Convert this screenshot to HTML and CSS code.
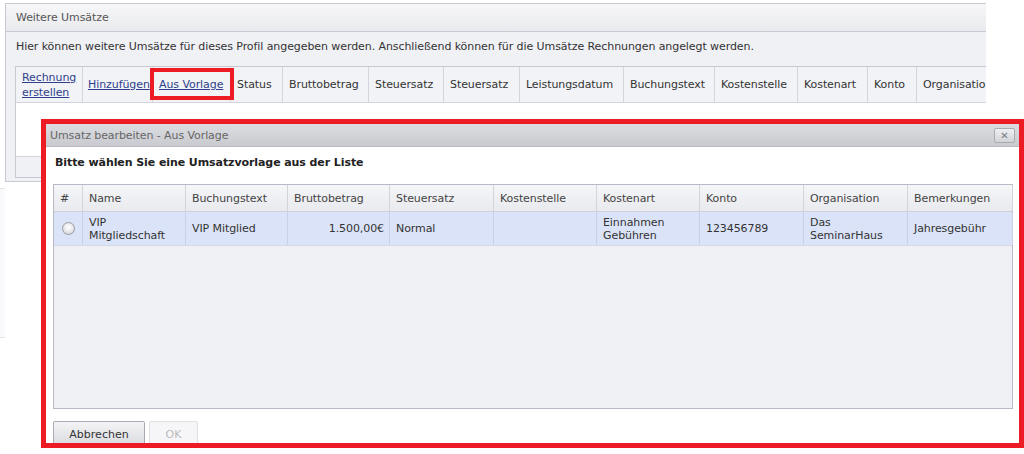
FILE: index.html
```html
<!DOCTYPE html>
<html lang="de">
<head>
<meta charset="utf-8">
<title>Weitere Umsätze</title>
<link rel="stylesheet" href="styles.css">
</head>
<body>
<div class="page">
  <div class="edge-frag"></div>
  <section class="bgwin">
    <div class="bgwin-title">Weitere Umsätze</div>
    <div class="bgwin-body">
      <p class="intro">Hier können weitere Umsätze für dieses Profil angegeben werden. Anschließend können für die Umsätze Rechnungen angelegt werden.</p>
      <div class="bggrid">
        <div class="bghead">
          <div class="bgcell c1"><a href="#">Rechnung erstellen</a></div>
          <div class="bgcell c2"><a href="#">Hinzufügen</a></div>
          <div class="bgcell c3"><a href="#">Aus Vorlage</a></div>
          <div class="bgcell c4">Status</div>
          <div class="bgcell c5">Bruttobetrag</div>
          <div class="bgcell c6">Steuersatz</div>
          <div class="bgcell c7">Steuersatz</div>
          <div class="bgcell c8">Leistungsdatum</div>
          <div class="bgcell c9">Buchungstext</div>
          <div class="bgcell c10">Kostenstelle</div>
          <div class="bgcell c11">Kostenart</div>
          <div class="bgcell c12">Konto</div>
          <div class="bgcell c13">Organisation</div>
        </div>
        <div class="bgbody"></div>
        <div class="bgfoot"></div>
      </div>
    </div>
  </section>

  <div class="mark-vorlage"></div>

  <section class="dialog">
    <div class="dlg-title">
      <span>Umsatz bearbeiten - Aus Vorlage</span>
      <span class="dlg-close">&#x2715;</span>
    </div>
    <div class="dlg-body">
      <p class="dlg-lead">Bitte wählen Sie eine Umsatzvorlage aus der Liste</p>
      <div class="dgrid">
        <div class="drow dhead">
          <div class="dcell">#</div>
          <div class="dcell">Name</div>
          <div class="dcell">Buchungstext</div>
          <div class="dcell">Bruttobetrag</div>
          <div class="dcell">Steuersatz</div>
          <div class="dcell">Kostenstelle</div>
          <div class="dcell">Kostenart</div>
          <div class="dcell">Konto</div>
          <div class="dcell">Organisation</div>
          <div class="dcell">Bemerkungen</div>
        </div>
        <div class="drow ddata">
          <div class="dcell center"><span class="radio"></span></div>
          <div class="dcell">VIP<br>Mitgliedschaft</div>
          <div class="dcell">VIP Mitglied</div>
          <div class="dcell right">1.500,00€</div>
          <div class="dcell">Normal</div>
          <div class="dcell"></div>
          <div class="dcell">Einnahmen<br>Gebühren</div>
          <div class="dcell">123456789</div>
          <div class="dcell">Das<br>SeminarHaus</div>
          <div class="dcell">Jahresgebühr</div>
        </div>
      </div>
      <div class="dlg-buttons">
        <button class="btn">Abbrechen</button>
        <button class="btn disabled">OK</button>
      </div>
    </div>
  </section>
</div>
</body>
</html>
```

FILE: styles.css
```css
* { box-sizing: border-box; }
html, body { margin: 0; padding: 0; background: #fff; }
body {
  font-family: "DejaVu Sans", Verdana, sans-serif;
  font-size: 11px;
  letter-spacing: -0.08px;
  color: #333;
  width: 1024px;
  height: 454px;
  overflow: hidden;
}
.page { position: relative; width: 1024px; height: 454px; padding: 3px 0 0 5px; }

.edge-frag {
  position: absolute; left: 0; top: 188px; width: 5px; height: 150px;
  border-top: 1px solid #e4e4ea; border-bottom: 1px solid #e4e4ea;
  background: #fafafc;
}

/* background window */
.bgwin {
  width: 981px;
  height: 179px;
  border: 1px solid #c8c9d0;
  border-right: 0;
  background: #f0f1f5;
  overflow: hidden;
}
.bgwin-title {
  height: 28px;
  line-height: 27px;
  padding-left: 10px;
  color: #555;
  background: linear-gradient(#f7f7f9, #e9eaed);
  border-bottom: 1px solid #c8c9d0;
}
.bgwin-body { padding: 8px 0 0 9px; }
.intro { margin: 0 0 12px 1px; line-height: 14px; color: #333; }
.bggrid {
  width: 1000px;
  border-left: 1px solid #c8c9d0;
  border-top: 1px solid #c8c9d0;
}
.bghead {
  display: grid;
  grid-template-columns: 67px 70px 78px 52px 86px 75px 76px 104px 91px 83px 70px 49px 120px;
  height: 36px;
  background: #f2f3f6;
  border-bottom: 1px solid #d4d5dc;
}
.bgcell {
  display: flex; align-items: center;
  padding: 0 6px;
  border-right: 1px solid #d4d5dc;
  white-space: nowrap;
  line-height: 15px;
  color: #333;
}
.bgcell.c1 { white-space: normal; padding-left: 6px; }
.bgcell a { color: #2f3f8c; text-decoration: underline; }
.bgcell.c2 { padding-left: 5px; padding-right: 0; }
.bgcell.c3 { padding-left: 6px; }
.bgbody { height: 54px; background: #fff; border-bottom: 1px solid #d4d5dc; }
.bgfoot { height: 21px; background: #f0f1f5; border-bottom: 1px solid #c8c9d0; }

.mark-vorlage {
  position: absolute;
  left: 150px; top: 68px;
  width: 84px; height: 32px;
  border: 4px solid #ed1c24;
}

/* dialog */
.dialog {
  position: absolute;
  left: 41px; top: 119px;
  width: 983px; height: 329px;
  border: 5px solid #ed1c24;
  background: #fff;
  overflow: hidden;
}
.dlg-title {
  height: 23px;
  display: flex; align-items: center; justify-content: space-between;
  padding: 0 4px 0 4px;
  color: #666;
  background: linear-gradient(#dcdde1, #c9cacf);
  border-bottom: 1px solid #b9bac0;
}
.dlg-close {
  width: 21px; height: 15px;
  display: flex; align-items: center; justify-content: center;
  font-size: 10px; font-weight: bold;
  color: #7a7c84;
  border: 1px solid #a9abb2;
  border-radius: 2px;
  background: linear-gradient(#f0f0f2, #d2d3d8);
}
.dlg-body { padding: 0 6px 0 7px; }
.dlg-lead { margin: 0; padding: 9px 0 0 2px; height: 37px; font-weight: bold; color: #222; line-height: 14px; }

.dgrid {
  width: 960px; height: 225px;
  border: 1px solid #b7b9c4;
  background: #eff0f4;
}
.drow {
  display: grid;
  grid-template-columns: 29px 103px 102px 102px 104px 103px 103px 104px 104px 105px;
}
.dhead { height: 27px; background: linear-gradient(#f5f6f8, #e9eaee); border-bottom: 1px solid #cfd1da; color: #444; }
.ddata { height: 34px; background: #dbe3f8; border-bottom: 1px solid #d5d9e6; color: #333; }
.dcell {
  display: flex; align-items: center;
  padding: 0 6px;
  border-right: 1px solid #d2d4dd;
  line-height: 13px;
  white-space: nowrap;
}
.ddata .dcell { border-right-color: #c9d1ea; }
.dcell.right { justify-content: flex-end; padding-right: 5px; }
.dcell.center { justify-content: center; padding: 0; }
.radio {
  width: 13px; height: 13px; border-radius: 50%;
  border: 1px solid #9a9ca4;
  background: radial-gradient(circle at 50% 40%, #ffffff 0, #e6e6ea 55%, #c3c4ca 100%);
}

.dlg-buttons { display: flex; gap: 4px; padding-top: 12px; }
.btn {
  font: inherit;
  height: 26px;
  padding: 0 15px;
  border: 1px solid #a9abb4;
  border-radius: 2px;
  background: linear-gradient(#f4f4f6, #d9dadf);
  color: #333;
}
.btn:first-child { width: 92px; }
.btn.disabled { width: 49px; color: #bbb; border-color: #dfe0e4; background: #f6f6f8; }
```
